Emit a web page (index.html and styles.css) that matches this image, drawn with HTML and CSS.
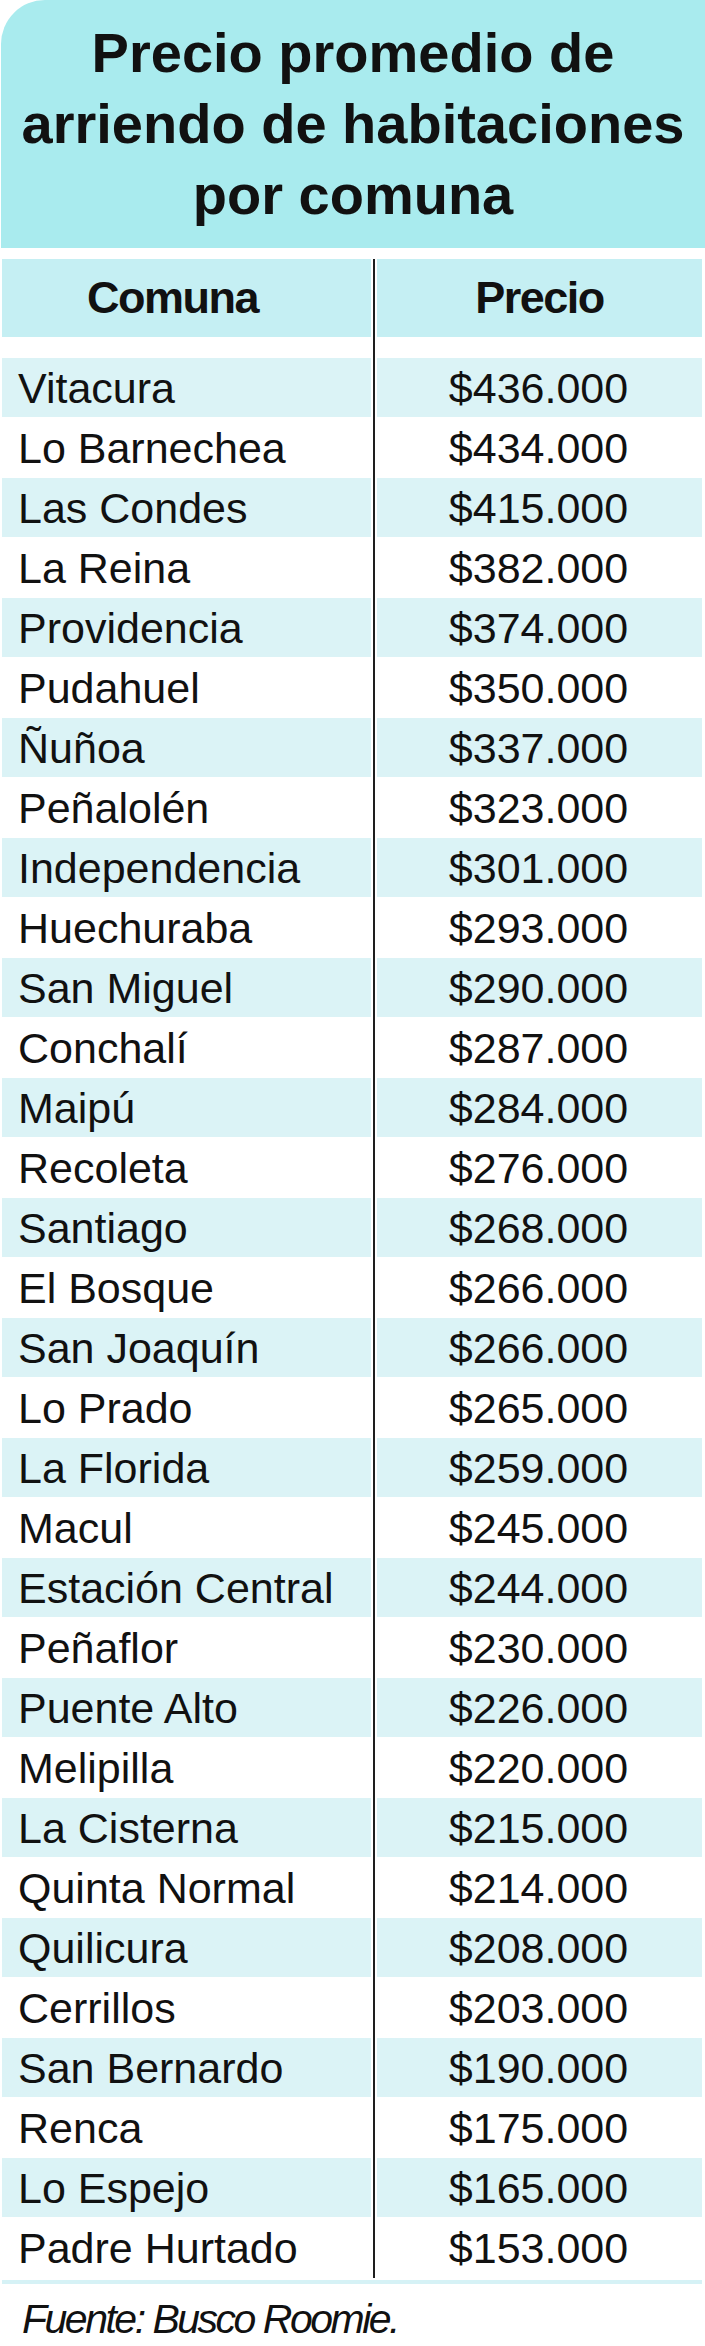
FILE: index.html
```html
<!DOCTYPE html>
<html lang="es">
<head>
<meta charset="utf-8">
<title>Precio promedio de arriendo de habitaciones por comuna</title>
<link rel="stylesheet" href="styles.css">
</head>
<body>
<div class="page">
  <header class="title-box">
    <h1 class="title">Precio promedio de<br>arriendo de habitaciones<br>por comuna</h1>
  </header>
  <div class="table">
    <div class="head">
      <div class="hcell hcell-left">Comuna</div>
      <div class="hcell hcell-right">Precio</div>
    </div>
    <div class="rows">
      <div class="row band"><div class="name">Vitacura</div><div class="price">$436.000</div></div>
      <div class="row"><div class="name">Lo Barnechea</div><div class="price">$434.000</div></div>
      <div class="row band"><div class="name">Las Condes</div><div class="price">$415.000</div></div>
      <div class="row"><div class="name">La Reina</div><div class="price">$382.000</div></div>
      <div class="row band"><div class="name">Providencia</div><div class="price">$374.000</div></div>
      <div class="row"><div class="name">Pudahuel</div><div class="price">$350.000</div></div>
      <div class="row band"><div class="name">Ñuñoa</div><div class="price">$337.000</div></div>
      <div class="row"><div class="name">Peñalolén</div><div class="price">$323.000</div></div>
      <div class="row band"><div class="name">Independencia</div><div class="price">$301.000</div></div>
      <div class="row"><div class="name">Huechuraba</div><div class="price">$293.000</div></div>
      <div class="row band"><div class="name">San Miguel</div><div class="price">$290.000</div></div>
      <div class="row"><div class="name">Conchalí</div><div class="price">$287.000</div></div>
      <div class="row band"><div class="name">Maipú</div><div class="price">$284.000</div></div>
      <div class="row"><div class="name">Recoleta</div><div class="price">$276.000</div></div>
      <div class="row band"><div class="name">Santiago</div><div class="price">$268.000</div></div>
      <div class="row"><div class="name">El Bosque</div><div class="price">$266.000</div></div>
      <div class="row band"><div class="name">San Joaquín</div><div class="price">$266.000</div></div>
      <div class="row"><div class="name">Lo Prado</div><div class="price">$265.000</div></div>
      <div class="row band"><div class="name">La Florida</div><div class="price">$259.000</div></div>
      <div class="row"><div class="name">Macul</div><div class="price">$245.000</div></div>
      <div class="row band"><div class="name">Estación Central</div><div class="price">$244.000</div></div>
      <div class="row"><div class="name">Peñaflor</div><div class="price">$230.000</div></div>
      <div class="row band"><div class="name">Puente Alto</div><div class="price">$226.000</div></div>
      <div class="row"><div class="name">Melipilla</div><div class="price">$220.000</div></div>
      <div class="row band"><div class="name">La Cisterna</div><div class="price">$215.000</div></div>
      <div class="row"><div class="name">Quinta Normal</div><div class="price">$214.000</div></div>
      <div class="row band"><div class="name">Quilicura</div><div class="price">$208.000</div></div>
      <div class="row"><div class="name">Cerrillos</div><div class="price">$203.000</div></div>
      <div class="row band"><div class="name">San Bernardo</div><div class="price">$190.000</div></div>
      <div class="row"><div class="name">Renca</div><div class="price">$175.000</div></div>
      <div class="row band"><div class="name">Lo Espejo</div><div class="price">$165.000</div></div>
      <div class="row"><div class="name">Padre Hurtado</div><div class="price">$153.000</div></div>
    </div>
  </div>
  <div class="rule"></div>
  <p class="source">Fuente: Busco Roomie.</p>
</div>
</body>
</html>
```

FILE: styles.css
```css
html, body {
  margin: 0;
  padding: 0;
  background: #ffffff;
}

.page {
  width: 705px;
  font-family: "Liberation Sans", Arial, sans-serif;
  color: #111111;
}

.title-box {
  background: #a9ebee;
  border-top-left-radius: 44px;
  margin-left: 1px;
  padding: 17px 0 18px;
}

.title {
  margin: 0;
  font-size: 56px;
  line-height: 71px;
  font-weight: 700;
  text-align: center;
  letter-spacing: 0;
}

.table {
  margin: 11px 3px 0 2px;
  background: linear-gradient(to right,
    transparent 371px, #1e1e1e 371px, #1e1e1e 373px, transparent 373px);
}

.head {
  display: grid;
  grid-template-columns: 369px 325px;
  column-gap: 6px;
}

.hcell {
  background: #c5eff3;
  height: 78px;
  line-height: 78px;
  font-size: 45px;
  font-weight: 700;
  letter-spacing: -1.5px;
  text-align: center;
}

.hcell-left {
  padding-right: 28px;
}

.rows {
  padding-top: 21px;
}

.row {
  display: grid;
  grid-template-columns: 369px 325px;
  column-gap: 6px;
  height: 60px;
  line-height: 60px;
  font-size: 43px;
}

.row.band .name,
.row.band .price {
  background: #dbf3f6;
  height: 59px;
}

.name {
  padding-left: 16px;
  white-space: nowrap;
}

.price {
  text-align: center;
  padding-right: 2px;
}

.rule {
  margin: 2px 3px 0 2px;
  height: 4px;
  background: #d6f2f6;
}

.source {
  margin: 10px 0 0 22px;
  font-family: "Liberation Sans", Arial, sans-serif;
  font-style: italic;
  font-size: 41px;
  letter-spacing: -2.5px;
  line-height: 50px;
}
```
